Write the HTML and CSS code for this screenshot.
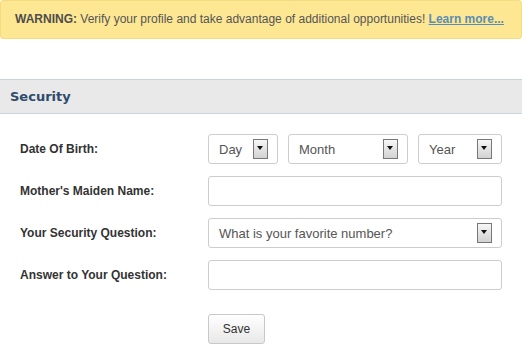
FILE: index.html
```html
<!DOCTYPE html>
<html>
  <head>
    <meta name="viewport" content="width=device-width, initial-scale=1.0">
    <link rel="stylesheet" href="styles.css">
  </head>
  <body>
    <div class="warning-bar">
      <b>WARNING:</b> Verify your profile and take advantage of additional opportunities! <a href="#" class="learn-link">Learn more...</a>
    </div>

    <h2 class="section-title">Security</h2>

    <form class="security-form">
      <div class="form-row">
        <label class="form-label">Date Of Birth:</label>
        <div class="date-group">
          <div class="fake-select day-select"><span>Day</span><span class="arrow-box"></span></div>
          <div class="fake-select month-select"><span>Month</span><span class="arrow-box"></span></div>
          <div class="fake-select year-select"><span>Year</span><span class="arrow-box"></span></div>
        </div>
      </div>
      <div class="form-row">
        <label class="form-label">Mother's Maiden Name:</label>
        <input type="text" class="text-input">
      </div>
      <div class="form-row">
        <label class="form-label">Your Security Question:</label>
        <div class="fake-select question-select"><span>What is your favorite number?</span><span class="arrow-box"></span></div>
      </div>
      <div class="form-row">
        <label class="form-label">Answer to Your Question:</label>
        <input type="text" class="text-input">
      </div>
      <div class="form-row save-row">
        <span class="form-label"></span>
        <button type="button" class="save-button">Save</button>
      </div>
    </form>
  </body>
</html>
```

FILE: styles.css
```css
body {
  margin: 0;
  font-family: "Liberation Sans", Arial, sans-serif;
  font-size: 12px;
  color: #333;
  background: #fff;
}
.warning-bar {
  height: 37px;
  line-height: 37px;
  padding-left: 14px;
  background-color: #fde793;
  border: 1px solid #f3dc82;
  border-radius: 3px;
  color: #555;
  white-space: nowrap;
}
.warning-bar b {
  color: #4d4d4d;
}
.learn-link {
  color: #5b8db4;
  font-weight: bold;
}
.section-title {
  margin: 40px 0 0 0;
  height: 33px;
  line-height: 33px;
  padding-left: 10px;
  background-color: #e9e9e9;
  border-top: 1px solid #c9d4de;
  border-bottom: 1px solid #c9d4de;
  font-family: "DejaVu Sans", Verdana, sans-serif;
  font-size: 13px;
  font-weight: bold;
  color: #2d4b6b;
}
.security-form {
  padding: 20px 20px 0 20px;
}
.form-row {
  display: flex;
  align-items: center;
  height: 30px;
  margin-bottom: 12px;
}
.save-row {
  margin-top: 24px;
}
.form-label {
  width: 188px;
  flex-shrink: 0;
  font-weight: bold;
  color: #333;
}
.date-group {
  display: flex;
  gap: 10px;
}
.fake-select, .text-input {
  box-sizing: border-box;
  height: 30px;
  border: 1px solid #cdcdcd;
  border-radius: 3px;
  background: #fff;
}
.fake-select {
  display: flex;
  align-items: center;
  justify-content: space-between;
  padding: 0 9px 0 10px;
  font-size: 13px;
  color: #555;
}
.day-select { width: 70px; }
.month-select { width: 120px; }
.year-select { width: 84px; }
.question-select, .text-input {
  width: 294px;
}
.arrow-box {
  position: relative;
  box-sizing: border-box;
  width: 15px;
  height: 20px;
  border: 1px solid #777;
  background: linear-gradient(#f7f7f7, #d2d2d2);
}
.arrow-box::after {
  content: "";
  position: absolute;
  left: 3px;
  top: 6px;
  border-left: 3.5px solid transparent;
  border-right: 3.5px solid transparent;
  border-top: 4px solid #111;
}
.save-button {
  box-sizing: border-box;
  width: 57px;
  height: 30px;
  border: 1px solid #c8c8c8;
  border-radius: 3px;
  background: linear-gradient(#ffffff, #e8e8e8);
  font-family: "Liberation Sans", Arial, sans-serif;
  font-size: 12px;
  color: #333;
}
```
